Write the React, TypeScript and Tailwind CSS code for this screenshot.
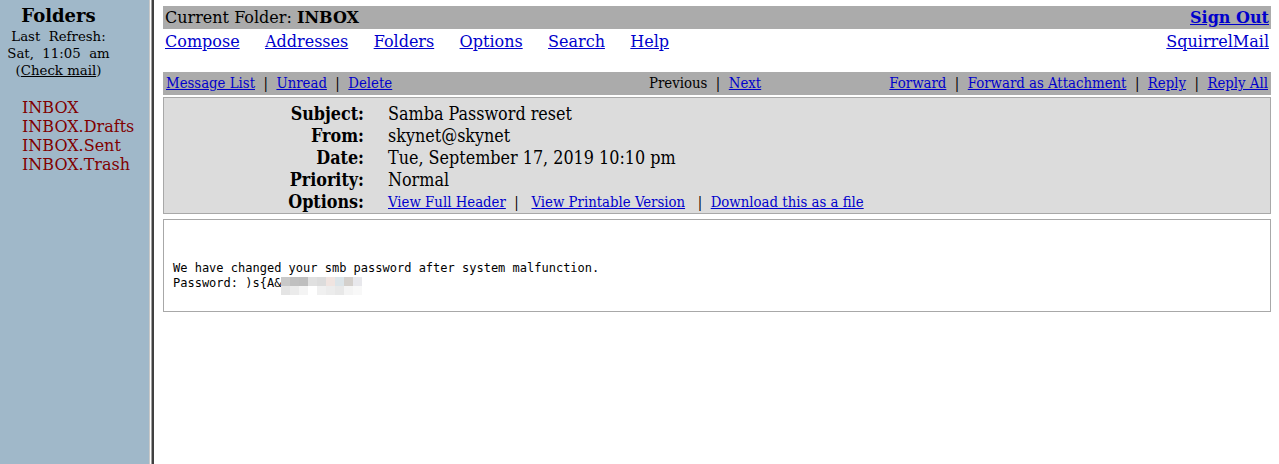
const serif = "font-['DejaVu_Serif',serif]"
const cond = "font-['DejaVu_Serif',serif] [font-stretch:condensed]"
const link = 'text-[#0000cc] underline'

const row1 = ['#c8c8c8', '#c0c0c0', '#bebebe', '#e0e0e0', '#dcdcdc', '#f0e4e0', '#dce4e8', '#d4d0cc', '#e8e8ec']
const row2 = ['#e4e4e4', '#ebebeb', '#f4f4f4', '#ffffff', '#f0f0f0', '#ececec', '#e8e8e8', '#f4f4f4', '#f8f8f8']

function Blur() {
  return (
    <span className="inline-flex flex-col align-top pt-[1px]">
      <span className="flex">
        {row1.map((c, i) => (
          <span key={i} className="block h-[9px] w-[9px]" style={{ background: c }} />
        ))}
      </span>
      <span className="flex">
        {row2.map((c, i) => (
          <span key={i} className="block h-[9px] w-[9px]" style={{ background: c }} />
        ))}
      </span>
    </span>
  )
}

export default function App() {
  return (
    <div className={`flex h-[464px] w-[1279px] overflow-hidden bg-white text-black ${serif}`}>
      {/* Left frame */}
      <aside className="w-[149px] shrink-0 bg-[#a0b8c9]">
        <div className="w-[117px] pt-[5px] text-center">
          <div className="text-[18px] font-bold leading-[22px]">Folders</div>
          <div className="mt-[1px] text-[13.3px] leading-[17px]">
            <div>Last&nbsp; Refresh:</div>
            <div>Sat,&nbsp; 11:05&nbsp; am</div>
            <div>
              (<span className="underline">Check mail</span>)
            </div>
          </div>
        </div>
        <ul className="mt-[19px] pl-[22px] text-[16px] leading-[19px] text-[#800000]">
          <li>INBOX</li>
          <li>INBOX.Drafts</li>
          <li>INBOX.Sent</li>
          <li>INBOX.Trash</li>
        </ul>
      </aside>

      {/* Frame border */}
      <div className="flex shrink-0">
        <div className="w-px bg-[#c8c8c8]" />
        <div className="w-px bg-white" />
        <div className="w-px bg-[#a0a0a0]" />
        <div className="w-[2px] bg-[#404040]" />
      </div>

      {/* Right frame */}
      <main className="min-w-0 flex-1 pl-[9px] pr-[8px] pt-[6px]">
        <div className="flex h-[23px] items-center justify-between bg-[#ababab] px-[2px] text-[16px]">
          <span>
            Current Folder: <b>INBOX</b>
          </span>
          <a className={`font-bold ${link}`}>Sign Out</a>
        </div>
        <div className="flex h-[24px] items-center justify-between px-[2px] pt-[2px] text-[16px]">
          <div className="flex gap-[25.4px]">
            <a className={link}>Compose</a>
            <a className={link}>Addresses</a>
            <a className={link}>Folders</a>
            <a className={link}>Options</a>
            <a className={link}>Search</a>
            <a className={link}>Help</a>
          </div>
          <a className={link}>SquirrelMail</a>
        </div>

        <div className={`mt-[19px] flex h-[23px] items-center bg-[#ababab] px-[3px] text-[14.8px] ${cond}`}>
          <div className="w-[483px] shrink-0">
            <a className={link}>Message List</a>&nbsp; |&nbsp; <a className={link}>Unread</a>&nbsp; |&nbsp;{' '}
            <a className={link}>Delete</a>
          </div>
          <div>
            Previous&nbsp; |&nbsp; <a className={link}>Next</a>
          </div>
          <div className="ml-auto">
            <a className={link}>Forward</a>&nbsp; |&nbsp; <a className={link}>Forward as Attachment</a>&nbsp; |&nbsp;{' '}
            <a className={link}>Reply</a>&nbsp; |&nbsp; <a className={link}>Reply All</a>
          </div>
        </div>

        <div className={`mt-[2px] border border-[#a8a8a8] bg-[#dcdcdc] pt-[5px] ${cond}`}>
          <div className="grid grid-cols-[200px_1fr] gap-x-[24px] text-[17.8px] leading-[22px]">
            <div className="text-right font-bold">Subject:</div>
            <div>Samba Password reset</div>
            <div className="text-right font-bold">From:</div>
            <div>skynet@skynet</div>
            <div className="text-right font-bold">Date:</div>
            <div>Tue, September 17, 2019 10:10 pm</div>
            <div className="text-right font-bold">Priority:</div>
            <div>Normal</div>
            <div className="text-right font-bold">Options:</div>
            <div className="text-[14.8px]">
              <a className={link}>View Full Header</a>&nbsp; |&nbsp;&nbsp; <a className={link}>View Printable Version</a>
              &nbsp;&nbsp; |&nbsp; <a className={link}>Download this as a file</a>
            </div>
          </div>
        </div>

        <div className="mt-[5px] h-[93px] border border-[#a8a8a8] bg-white pl-[9px] pt-[41px] font-['DejaVu_Sans_Mono',monospace] text-[12px] leading-[15px]">
          <div>We have changed your smb password after system malfunction.</div>
          <div className="whitespace-pre">
            Password: )s{'{'}A&amp;
            <Blur />
          </div>
        </div>
      </main>
    </div>
  )
}
